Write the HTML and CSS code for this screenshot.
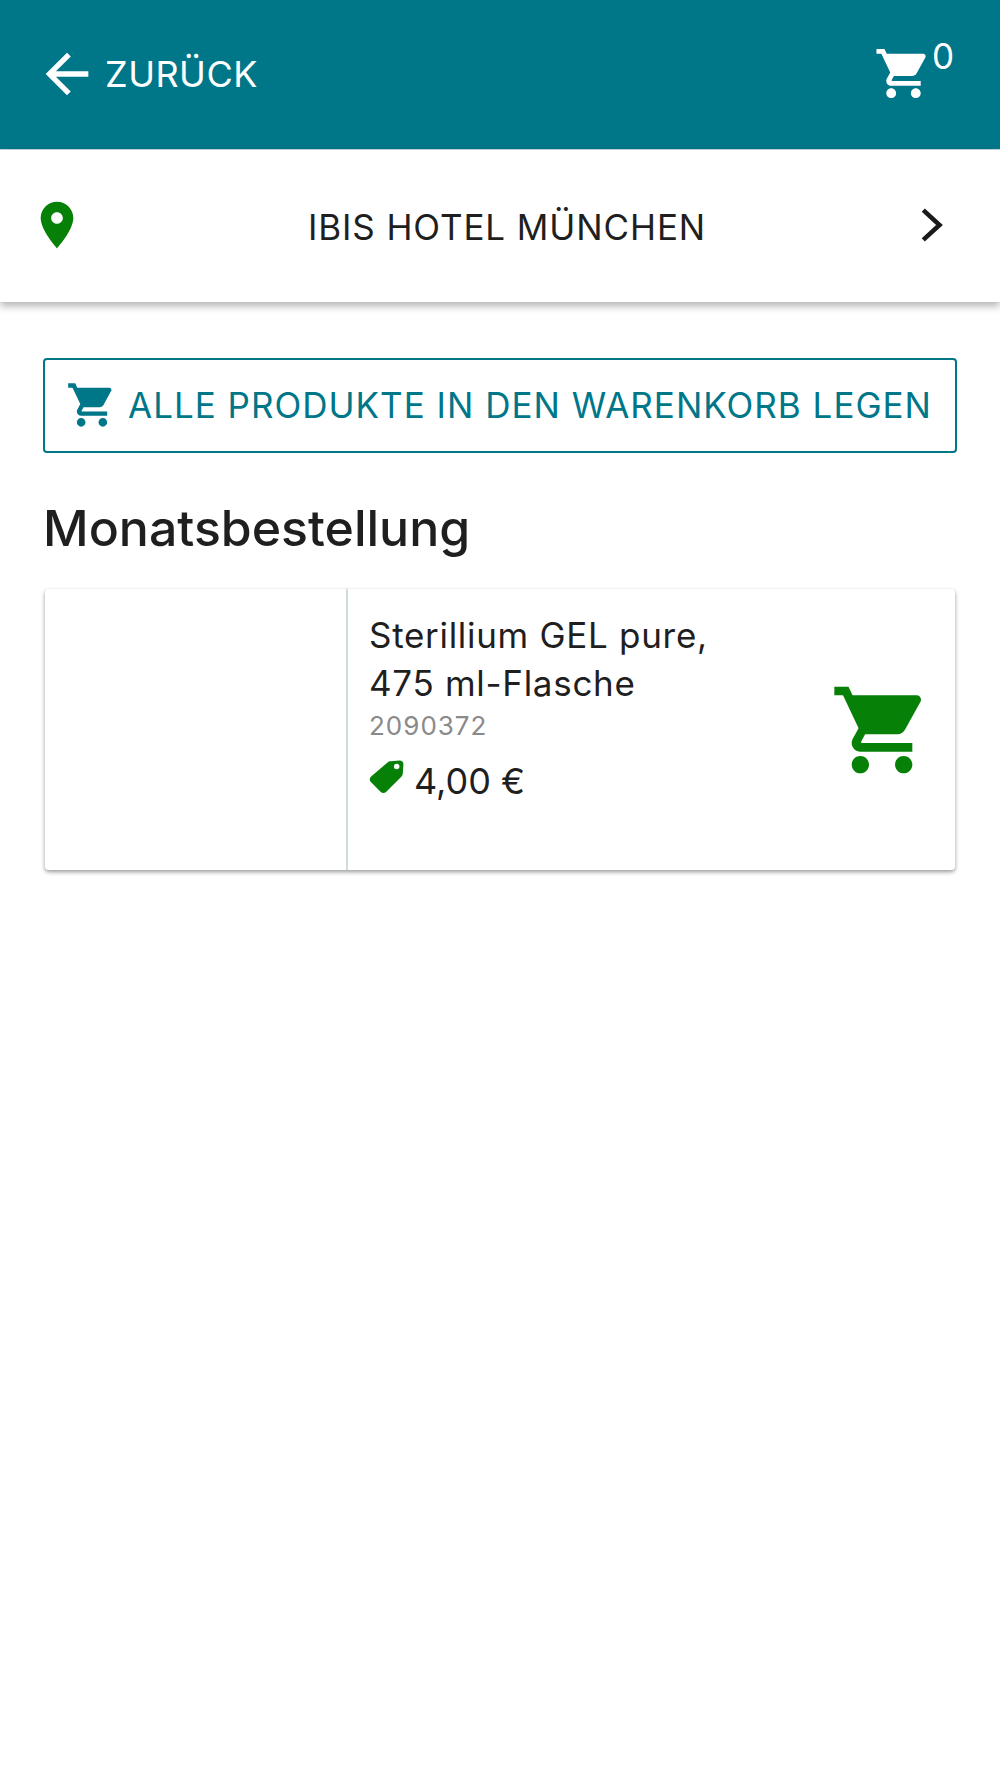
FILE: index.html
```html
<!DOCTYPE html>
<html lang="de">
<head>
<meta charset="utf-8">
<title>Monatsbestellung</title>
<link rel="stylesheet" href="styles.css">
</head>
<body>
<header class="topbar">
  <div class="back">
    <svg class="icon-back" viewBox="0 0 24 24"><path d="M20 11H7.83l5.59-5.59L12 4l-8 8 8 8 1.41-1.41L7.83 13H20v-2z"/></svg>
    <span class="back-label">ZURÜCK</span>
  </div>
  <div class="cart-top">
    <svg class="icon-cart-top" viewBox="0 0 24 24"><path d="M7 18c-1.1 0-1.99.9-1.99 2S5.9 22 7 22s2-.9 2-2-.9-2-2-2zM1 2v2h2l3.6 7.59-1.35 2.45c-.16.28-.25.61-.25.96 0 1.1.9 2 2 2h12v-2H7.42c-.14 0-.25-.11-.25-.25l.03-.12.9-1.63h7.45c.75 0 1.41-.41 1.75-1.03l3.58-6.49c.08-.14.12-.31.12-.48 0-.55-.45-1-1-1H5.21l-.94-2H1zm16 16c-1.1 0-1.99.9-1.99 2s.89 2 1.99 2 2-.9 2-2-.9-2-2-2z"/></svg>
    <span class="cart-count">0</span>
  </div>
</header>
<section class="location">
  <svg class="icon-pin" viewBox="0 0 24 24"><path d="M12 2C8.13 2 5 5.13 5 9c0 5.25 7 13 7 13s7-7.75 7-13c0-3.87-3.13-7-7-7zm0 9.5c-1.38 0-2.5-1.12-2.5-2.5s1.12-2.5 2.5-2.5 2.500 1.120 2.500 2.500-1.120 2.500-2.500 2.500z"/></svg>
  <span class="location-name">IBIS HOTEL MÜNCHEN</span>
  <svg class="icon-chevron" viewBox="0 0 24 24"><polyline points="9.100,6.400 15.200,12 9.100,17.600"/></svg>
</section>
<main class="content">
  <button class="add-all" type="button">
    <svg class="icon-cart-btn" viewBox="0 0 24 24"><path d="M7 18c-1.1 0-1.99.9-1.99 2S5.9 22 7 22s2-.9 2-2-.9-2-2-2zM1 2v2h2l3.6 7.59-1.35 2.45c-.16.28-.25.61-.25.96 0 1.1.9 2 2 2h12v-2H7.42c-.14 0-.25-.11-.25-.25l.03-.12.9-1.63h7.45c.75 0 1.41-.41 1.75-1.03l3.58-6.49c.08-.14.12-.31.12-.48 0-.55-.45-1-1-1H5.21l-.94-2H1zm16 16c-1.1 0-1.99.9-1.99 2s.89 2 1.99 2 2-.9 2-2-.9-2-2-2z"/></svg>
    <span class="add-all-label">ALLE PRODUKTE IN DEN WARENKORB LEGEN</span>
  </button>
  <h1 class="section-title">Monatsbestellung</h1>
  <article class="card">
    <div class="card-image"></div>
    <div class="card-body">
      <div class="product-name">Sterillium GEL pure,<br>475 ml-Flasche</div>
      <div class="product-sku">2090372</div>
      <div class="product-price">
        <svg class="icon-tag" viewBox="0 0 36 36"><path fill-rule="evenodd" d="M19 2.5c.9-.9 1.9-1.3 3-1.3L31.5.6c2.2-.1 4 1.700 3.900 3.900l-.6 9.500c-.1 1.100-.5 2.100-1.300 2.900L17.500 32.900c-1.500 1.500-3.900 1.500-5.400 0L1.900 22.700c-1.500-1.500-1.500-3.900 0-5.400L19 2.500zM28.500 9.500a2.800 2.800 0 1 0 0-5.600 2.800 2.800 0 0 0 0 5.600z"/></svg>
        <span>4,00 €</span>
      </div>
    </div>
    <svg class="icon-cart-card" viewBox="0 0 24 24"><path d="M7 18c-1.1 0-1.99.9-1.99 2S5.9 22 7 22s2-.9 2-2-.9-2-2-2zM1 2v2h2l3.6 7.59-1.35 2.45c-.16.28-.25.61-.25.96 0 1.1.9 2 2 2h12v-2H7.42c-.14 0-.25-.11-.25-.25l.03-.12.9-1.63h7.45c.75 0 1.41-.41 1.75-1.03l3.58-6.49c.08-.14.12-.31.12-.48 0-.55-.45-1-1-1H5.21l-.94-2H1zm16 16c-1.1 0-1.99.9-1.99 2s.89 2 1.99 2 2-.9 2-2-.9-2-2-2z"/></svg>
  </article>
</main>
</body>
</html>
```
FILE: styles.css
```css
* { box-sizing: border-box; }
html, body { margin: 0; padding: 0; }
body {
  width: 1000px;
  height: 1778px;
  background: #fff;
  color: #1f1f1f;
  font-family: Inter, "Liberation Sans", sans-serif;
  font-weight: 400;
  overflow: hidden;
}
svg { display: block; flex: none; }

.topbar {
  height: 150px;
  background: #007689;
  color: #fff;
  display: flex;
  align-items: flex-start;
  justify-content: space-between;
  border-bottom: 1px solid #c9d6e0;
}
.back { display: flex; align-items: center; margin: 41px 0 0 35px; }
.icon-back { width: 64px; height: 64px; fill: #fff; }
.back-label { font-size: 36px; margin-left: 6px; line-height: 66px; letter-spacing: 0.5px; }
.cart-top { display: flex; align-items: flex-start; margin: 44px 46px 0 0; }
.icon-cart-top { width: 59px; height: 59px; fill: #fff; }
.cart-count { font-size: 35px; line-height: 42px; margin-top: -9px; margin-left: -1px; }

.location {
  height: 152px;
  padding: 0 58px 0 29px;
  display: flex;
  align-items: center;
  background: #fff;
  box-shadow: 0 4px 8px rgba(0, 0, 0, 0.3);
  position: relative;
}
.icon-pin { width: 56px; height: 56px; fill: #068006; margin-top: -2px; }
.location-name { flex: 1; text-align: center; font-size: 35px; letter-spacing: 0.9px; color: #1f1f1f; margin: 1px 0 0 29px; }
.icon-chevron { width: 64px; height: 64px; fill: none; stroke: #1a1a1a; stroke-width: 1.7; margin: -2px -21px 0 -1px; }

.content { padding: 56px 43px 0; }
.add-all {
  width: 914px;
  height: 95px;
  padding: 0 0 2px 21px;
  display: flex;
  align-items: center;
  background: #fff;
  border: 2px solid #007689;
  border-radius: 4px;
  color: #007689;
  font: inherit;
}
.icon-cart-btn { width: 52px; height: 52px; fill: #007689; }
.add-all-label { font-size: 35px; letter-spacing: 1px; margin-left: 10px; white-space: nowrap; }
.section-title { margin: 42px 0 0; font-size: 50px; font-weight: 500; line-height: 66px; color: #1f1f1f; }

.card {
  width: 910px;
  height: 281px;
  margin: 28px 0 0 2px;
  display: flex;
  align-items: flex-start;
  background: #fff;
  border-radius: 4px;
  box-shadow: 0 2px 4px rgba(0, 0, 0, 0.4);
}
.card-image { width: 303px; height: 100%; border-right: 2px solid #cfdcd9; }
.card-body { flex: 1; padding: 22px 0 0 21px; }
.product-name { font-size: 35px; line-height: 48px; letter-spacing: 0.7px; }
.product-sku { font-size: 26px; line-height: 30px; letter-spacing: 1px; color: #8a8a8a; margin-top: 4px; }
.product-price { display: flex; align-items: center; font-size: 36px; line-height: 48px; margin-top: 16px; }
.icon-tag { width: 35px; height: 35px; fill: #068006; margin-right: 10px; margin-top: -8px; }
.icon-cart-card { width: 104px; height: 104px; fill: #068006; margin: 89px 21px 0 0; }
```
